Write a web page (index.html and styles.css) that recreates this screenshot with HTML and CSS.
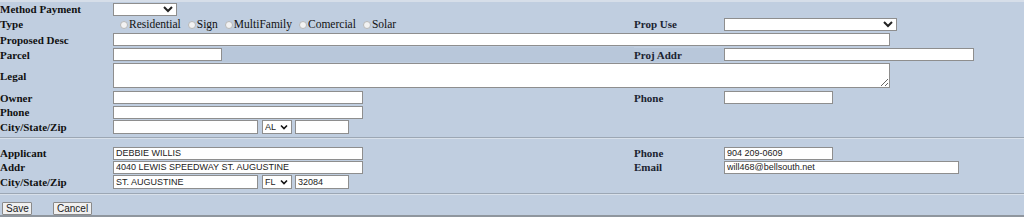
FILE: index.html
```html
<!DOCTYPE html>
<html lang="en">
<head>
    <meta charset="UTF-8">
    <title>Permit Entry</title>
    <link rel="stylesheet" href="styles.css">
</head>
<body>
    <form class="permit-form">
        <div class="section">
            <div class="row r-method">
                <label class="lbl">Method Payment</label>
                <div class="cell"><select class="sel-pay"><option></option></select></div>
            </div>
            <div class="row r-type">
                <label class="lbl">Type</label>
                <div class="cell radios">
                    <label><input type="radio" name="type">Residential</label>
                    <label><input type="radio" name="type">Sign</label>
                    <label><input type="radio" name="type">MultiFamily</label>
                    <label><input type="radio" name="type">Comercial</label>
                    <label><input type="radio" name="type">Solar</label>
                </div>
                <label class="lbl-r">Prop Use</label>
                <div class="cell"><select class="sel-use"><option></option></select></div>
            </div>
            <div class="row r-desc">
                <label class="lbl">Proposed Desc</label>
                <div class="cell wide"><input type="text" class="in-wide"></div>
            </div>
            <div class="row r-parcel">
                <label class="lbl">Parcel</label>
                <div class="cell tint"><input type="text" class="in-parcel"></div>
                <label class="lbl-r tint">Proj Addr</label>
                <div class="cell"><input type="text" class="in-addr"></div>
            </div>
            <div class="row r-legal">
                <label class="lbl">Legal</label>
                <div class="cell wide"><textarea class="ta-legal"></textarea></div>
            </div>
            <div class="row r-owner">
                <label class="lbl">Owner</label>
                <div class="cell"><input type="text" class="in-name"></div>
                <label class="lbl-r">Phone</label>
                <div class="cell"><input type="text" class="in-phone"></div>
            </div>
            <div class="row">
                <label class="lbl">Phone</label>
                <div class="cell"><input type="text" class="in-name"></div>
            </div>
            <div class="row r-city">
                <label class="lbl">City/State/Zip</label>
                <div class="cell city">
                    <input type="text" class="in-city">
                    <span class="state">
                        <select><option>AL</option></select>
                        <svg width="8" height="6" viewBox="0 0 8 6"><path d="M1 1.5 L4 4.5 L7 1.5" fill="none" stroke="#111" stroke-width="1.6"/></svg>
                    </span>
                    <input type="text" class="in-zip">
                </div>
            </div>
        </div>

        <div class="sep"></div>

        <div class="section">
            <div class="row">
                <label class="lbl">Applicant</label>
                <div class="cell"><input type="text" class="in-name" value="DEBBIE WILLIS"></div>
                <label class="lbl-r">Phone</label>
                <div class="cell"><input type="text" class="in-phone" value="904 209-0609"></div>
            </div>
            <div class="row">
                <label class="lbl">Addr</label>
                <div class="cell"><input type="text" class="in-name" value="4040 LEWIS SPEEDWAY ST. AUGUSTINE"></div>
                <label class="lbl-r">Email</label>
                <div class="cell"><input type="text" class="in-email" value="will468@bellsouth.net"></div>
            </div>
            <div class="row r-city">
                <label class="lbl">City/State/Zip</label>
                <div class="cell city">
                    <input type="text" class="in-city" value="ST. AUGUSTINE">
                    <span class="state">
                        <select><option>FL</option></select>
                        <svg width="8" height="6" viewBox="0 0 8 6"><path d="M1 1.5 L4 4.5 L7 1.5" fill="none" stroke="#111" stroke-width="1.6"/></svg>
                    </span>
                    <input type="text" class="in-zip" value="32084">
                </div>
            </div>
        </div>

        <div class="sep sep-low"></div>

        <div class="actions">
            <button type="button" class="btn">Save</button>
            <button type="button" class="btn">Cancel</button>
        </div>
    </form>
</body>
</html>
```

FILE: styles.css
```css
body { margin: 0; background: #c0cee0; font-family: "Liberation Serif", "Times New Roman", serif; color: #111; }
.permit-form { border-top: 2px solid #d6dee9; }
.row { display: grid; grid-template-columns: 113px 521px 90px 1fr; align-items: center; height: 14px; }
.r-method { height: 14px; }
.r-type { height: 16px; }
.r-desc { height: 15px; }
.r-parcel { height: 15px; }
.r-legal { height: 27px; }
.r-owner { height: 15px; margin-top: 1px; }
.r-city { height: 15px; }
.lbl, .lbl-r { font-size: 11px; font-weight: bold; line-height: 14px; white-space: nowrap; }
.lbl-r { color: #1b2330; }
.cell { display: flex; align-items: center; height: 100%; }
.wide { grid-column: 2 / 5; }
.tint { background: #b8c7da; }

input[type=text], select, textarea { box-sizing: border-box; font-family: "Liberation Sans", Arial, sans-serif; font-size: 9px; color: #222; background: #fff; border: 1px solid #8e8e8e; border-radius: 0; margin: 0; padding: 0 2px; }
input[type=text] { height: 13px; }
select { height: 13px; padding: 0 1px; }
.sel-pay { width: 64px; }
.sel-use { width: 173px; }
.in-wide { width: 777px; height: 14px; }
.in-parcel { width: 109px; height: 14px; }
.in-addr { width: 250px; height: 14px; }
.ta-legal { width: 777px; height: 25px; display: block; }
.in-name { width: 250px; }
.in-phone { width: 109px; }
.in-email { width: 235px; }
.in-city { width: 145px; height: 14px !important; }
.in-zip { width: 54px; height: 14px !important; }

.state { box-sizing: border-box; display: inline-flex; align-items: center; width: 30px; height: 14px; margin: 0 3px 0 4px; background: #fff; border: 1px solid #8e8e8e; }
.state select { appearance: none; border: 0; width: 17px; height: 12px; padding: 0 0 0 2px; background: transparent; }
.state svg { display: block; }

.radios { font-family: "Liberation Serif", "Times New Roman", serif; font-size: 11.5px; padding-left: 3px; gap: 3px; }
.radios label { display: inline-flex; align-items: center; }
.radios input { appearance: none; width: 8px; height: 8px; margin: 1px 1px 0 4px; border: 1px solid #b8b8b8; border-radius: 50%; background: #f2f2f2; }

.sep { margin: 3px 0 7px; border-top: 1px solid #9ca7b4; border-bottom: 1px solid #d8e0ea; }
.sep-low { margin: 4px 0 7px; }
.actions { display: flex; gap: 21px; padding: 0 0 0 2px; border-bottom: 2px solid #8f969e; }
.btn { font-family: "Liberation Sans", Arial, sans-serif; font-size: 10px; height: 13px; line-height: 11px; padding: 0 3px; background: #f0f0f0; border: 1px solid #8a8a8a; border-radius: 1px; color: #222; }
.btn:first-child { width: 30px; }
.btn:last-child { width: 39px; }
```
